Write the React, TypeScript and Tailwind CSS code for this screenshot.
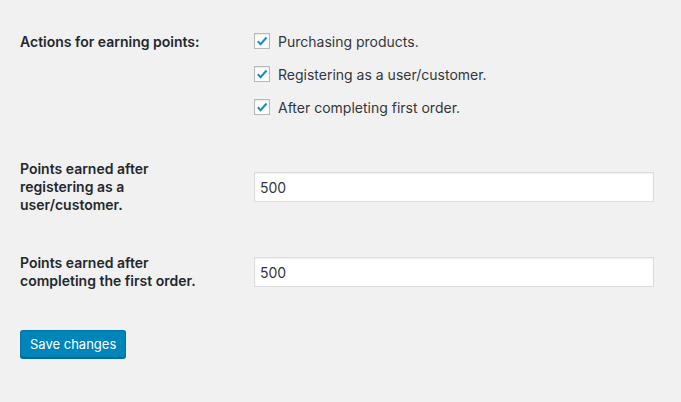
import React from 'react';

const Check: React.FC<{ label: string }> = ({ label }) => (
  <label className="flex items-center h-4 text-[14px] text-[#32373c]">
    <span className="w-4 h-4 shrink-0 bg-white border border-[#b4b9be] shadow-[inset_0_1px_2px_rgba(0,0,0,0.1)] flex items-center justify-center">
      <svg width="14" height="14" viewBox="0 0 20 20" fill="none" xmlns="http://www.w3.org/2000/svg">
        <path d="M4 10.5L8 14.5L16.5 5" stroke="#1e8cbe" strokeWidth="3" strokeLinecap="butt" strokeLinejoin="miter" />
      </svg>
    </span>
    <span className="ml-2">{label}</span>
  </label>
);

export default function App() {
  return (
    <div className="w-[681px] h-[402px] bg-[#f1f1f1] px-5 pt-[13px] font-['Inter',sans-serif] text-[#23282d]">
      {/* Actions row */}
      <div className="flex items-start h-[127px]">
        <div className="w-[234px] shrink-0 pt-5 text-[14px] font-semibold leading-[18px]">
          Actions for earning points:
        </div>
        <div className="flex flex-col gap-[17px] pt-5">
          <Check label="Purchasing products." />
          <Check label="Registering as a user/customer." />
          <Check label="After completing first order." />
        </div>
      </div>

      {/* Register points */}
      <div className="flex items-center">
        <div className="w-[234px] shrink-0 py-5">
          <div className="w-[200px] text-[14px] font-semibold leading-[18px]">
            Points earned after registering as a user/customer.
          </div>
        </div>
        <input
          type="text"
          defaultValue="500"
          className="w-[400px] h-[30px] bg-white border border-[#ddd] shadow-[inset_0_1px_2px_rgba(0,0,0,0.07)] px-[5px] text-[14px] text-[#32373c] outline-none"
        />
      </div>

      {/* First order points */}
      <div className="flex items-center">
        <div className="w-[234px] shrink-0 py-5">
          <div className="w-[200px] text-[14px] font-semibold leading-[18px]">
            Points earned after completing the first order.
          </div>
        </div>
        <input
          type="text"
          defaultValue="500"
          className="w-[400px] h-[30px] bg-white border border-[#ddd] shadow-[inset_0_1px_2px_rgba(0,0,0,0.07)] px-[5px] text-[14px] text-[#32373c] outline-none"
        />
      </div>

      <button className="mt-5 h-7 px-[9px] bg-[#0085ba] border border-[#0073aa] border-b-[#006799] rounded-[3px] shadow-[0_1px_0_#006799] text-white text-[13px] leading-[26px]">
        Save changes
      </button>
    </div>
  );
}
